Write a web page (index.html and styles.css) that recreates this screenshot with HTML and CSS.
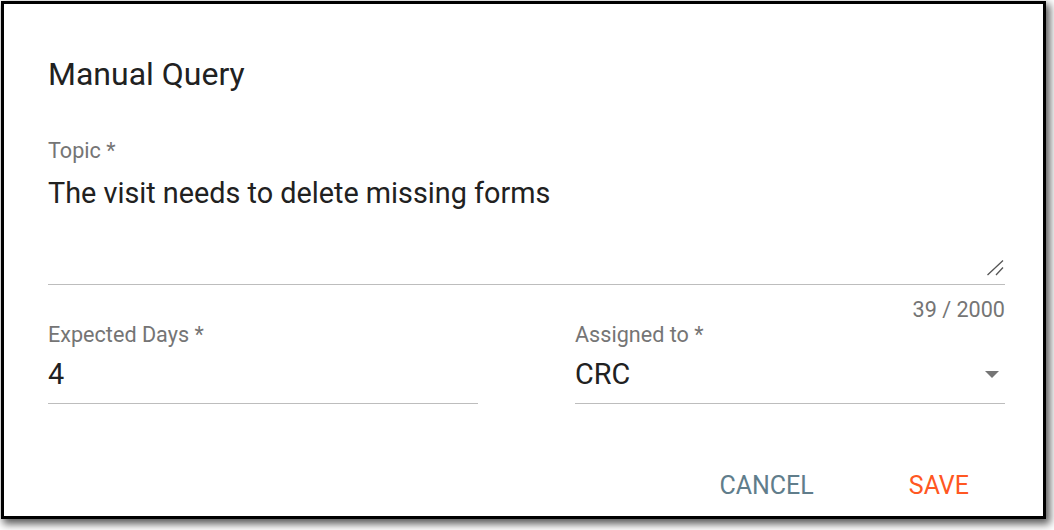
FILE: index.html
```html
<!DOCTYPE html>
<html lang="en">
<head>
<meta charset="utf-8">
<title>Manual Query</title>
<link rel="stylesheet" href="styles.css">
</head>
<body>
<div class="dialog">
  <h2 class="title">Manual Query</h2>
  <div class="field topic">
    <div class="label">Topic *</div>
    <div class="area">
      <div class="value">The visit needs to delete missing forms</div>
      <svg class="grip" width="17" height="16" viewBox="0 0 17 16"><path d="M16 0.5 L0.5 15 M16 7.5 L9 15" stroke="#555" stroke-width="1.3" fill="none"/></svg>
    </div>
    <div class="counter">39 / 2000</div>
  </div>
  <div class="row">
    <div class="field">
      <div class="label">Expected Days *</div>
      <div class="line"><span class="value">4</span></div>
    </div>
    <div class="field">
      <div class="label">Assigned to *</div>
      <div class="line"><span class="value">CRC</span><svg class="arrow" width="14" height="7" viewBox="0 0 14 7"><path d="M0 0 H14 L7 7 Z" fill="#757575"/></svg></div>
    </div>
  </div>
  <div class="actions">
    <button class="btn cancel">CANCEL</button>
    <button class="btn save">SAVE</button>
  </div>
</div>
</body>
</html>
```

FILE: styles.css
```css
html, body {
  margin: 0;
  padding: 0;
  background: #fff;
}
html {
  min-height: 530px;
}
body {
  min-height: 530px;
  font-family: Roboto, "Liberation Sans", sans-serif;
  color: #212121;
}
.dialog {
  box-sizing: border-box;
  margin: 1px 0 0 1px;
  width: 1045px;
  height: 518px;
  border: 3px solid #000;
  background: #fff;
  box-shadow: 3px 4px 8px 1px rgba(0, 0, 0, 0.65);
  padding: 50px 38px 0 44px;
}
.title {
  margin: 0;
  font-size: 32px;
  line-height: 40px;
  font-weight: 400;
  color: #212121;
}
.label {
  font-size: 21.6px;
  line-height: 24px;
  color: #757575;
}
.value {
  font-size: 28.8px;
  line-height: 36px;
  color: #212121;
}
.topic {
  margin-top: 45px;
}
.area {
  box-sizing: border-box;
  margin-top: 12px;
  height: 110px;
  border-bottom: 1px solid #bdbdbd;
  display: flex;
  flex-direction: column;
  padding-bottom: 8px;
}
.grip {
  margin-top: auto;
  align-self: flex-end;
  margin-right: 1px;
  display: block;
}
.counter {
  margin-top: 13px;
  text-align: right;
  font-size: 21.6px;
  line-height: 24px;
  color: #757575;
}
.row {
  margin-top: 1px;
  display: grid;
  grid-template-columns: 1fr 1fr;
  column-gap: 97px;
}
.line {
  margin-top: 9px;
  padding-bottom: 11px;
  border-bottom: 1px solid #bdbdbd;
  display: flex;
  align-items: center;
  justify-content: space-between;
}
.arrow {
  display: block;
  margin-right: 6px;
}
.actions {
  margin-top: 64px;
  display: flex;
  justify-content: flex-end;
  gap: 23px;
}
.btn {
  font-family: Roboto, "Liberation Sans", sans-serif;
  font-size: 25px;
  line-height: 36px;
  font-weight: 400;
  background: none;
  border: none;
  padding: 0 36px;
  margin: 0;
  cursor: pointer;
}
.cancel {
  color: #607d8b;
}
.save {
  color: #ff5722;
}
```
